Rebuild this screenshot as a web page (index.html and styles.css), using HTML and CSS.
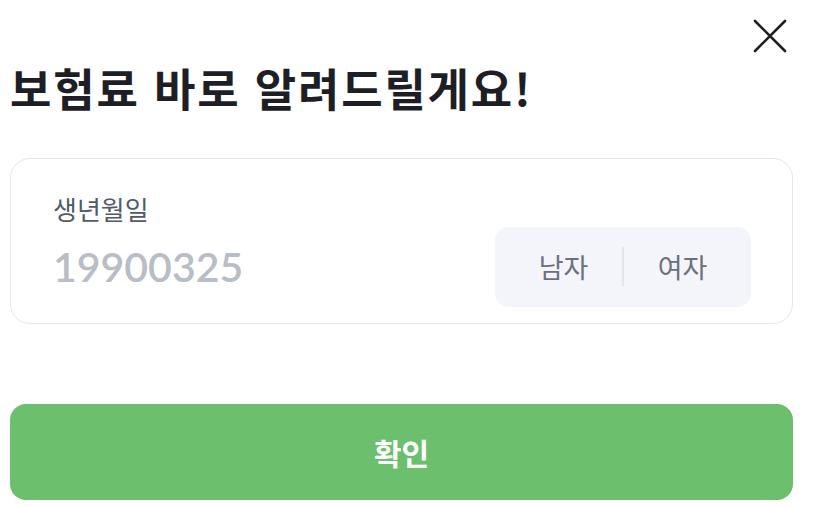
FILE: index.html
```html
<!DOCTYPE html>
<html lang="ko">
<head>
<meta charset="utf-8">
<link rel="stylesheet" href="styles.css">
</head>
<body>
<div class="page">
  <div class="topbar">
    <button class="close" aria-label="닫기">
      <svg width="34" height="34" viewBox="0 0 34 34"><path d="M2 2 L32 32 M32 2 L2 32" stroke="#1f1f24" stroke-width="2.6" stroke-linecap="round" fill="none"/></svg>
    </button>
  </div>
  <h1 class="title">보험료 바로 알려드릴게요!</h1>
  <div class="card">
    <div class="field">
      <div class="label">생년월일</div>
      <div class="value">19900325</div>
    </div>
    <div class="toggle">
      <div class="opt">남자</div>
      <div class="divider"></div>
      <div class="opt">여자</div>
    </div>
  </div>
  <button class="confirm">확인</button>
</div>
</body>
</html>
```

FILE: styles.css
```css
* { box-sizing: border-box; }
body {
  margin: 0;
  background: #fff;
  font-family: "Noto Sans CJK KR", "Noto Sans", sans-serif;
  color: #1e1e26;
}
.page {
  padding: 0 21px 0 10px;
}
.topbar {
  display: flex;
  justify-content: flex-end;
  height: 60px;
  padding-top: 19px;
  padding-right: 6px;
}
.close {
  border: 0;
  background: none;
  padding: 0;
  width: 34px;
  height: 34px;
  cursor: pointer;
}
.close svg { display: block; }
.title {
  margin: 0;
  font-size: 45px;
  font-weight: 700;
  line-height: 56px;
  letter-spacing: 1.8px;
  color: #1e1e26;
}
.card {
  margin-top: 42px;
  height: 166px;
  border: 1.5px solid #e4e6ea;
  border-radius: 20px;
  display: flex;
  align-items: center;
  justify-content: space-between;
  padding: 0 41px 0 42px;
}
.field {
  display: flex;
  flex-direction: column;
}
.label {
  font-size: 26px;
  line-height: 34px;
  color: #525a6a;
  margin-bottom: 17px;
}
.value {
  font-family: Lato, "Noto Sans", sans-serif;
  font-size: 41px;
  font-weight: 600;
  line-height: 48px;
  color: #b9bdc5;
}
.toggle {
  margin-top: 51px;
  width: 256px;
  height: 80px;
  padding: 0 10px;
  background: #f4f5fa;
  border-radius: 14px;
  display: flex;
  align-items: center;
}
.opt {
  flex: 1;
  text-align: center;
  font-size: 27px;
  color: #6b7081;
}
.divider {
  width: 2px;
  height: 39px;
  background: #e3e5ea;
}
.confirm {
  display: block;
  width: 100%;
  margin-top: 80px;
  height: 96px;
  border: 0;
  border-radius: 16px;
  background: #6cbf6c;
  color: #fff;
  font-family: "Noto Sans CJK KR", "Noto Sans", sans-serif;
  font-size: 30px;
  font-weight: 700;
}
```
